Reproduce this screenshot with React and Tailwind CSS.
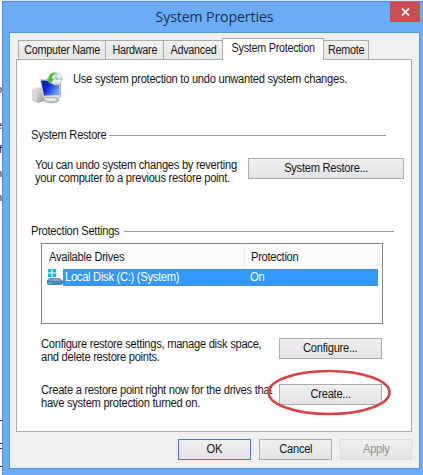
function ComputerIcon() {
  return (
    <svg className="block" width="32" height="32" viewBox="0 0 32 32">
      <defs>
        <linearGradient id="screen" x1="0" y1="0" x2="1" y2="0.5">
          <stop offset="0" stopColor="#0410a0" />
          <stop offset="0.5" stopColor="#1530d0" />
          <stop offset="1" stopColor="#6a9cf4" />
        </linearGradient>
        <linearGradient id="metal" x1="0" y1="0" x2="1" y2="1">
          <stop offset="0" stopColor="#f0f0ee" />
          <stop offset="1" stopColor="#9b9d9c" />
        </linearGradient>
      </defs>
      <path d="M1 17l6-2 6 2v12l-6 2-6-3z" fill="url(#metal)" />
      <path d="M1 17l5 2v10l-5-2z" fill="#d9dad9" />
      <ellipse cx="20.500" cy="28" rx="8" ry="3.500" fill="#b9bcbc" />
      <ellipse cx="20" cy="27" rx="6" ry="2" fill="#e8eaea" />
      <path d="M8.500 7l21 0.500 0.500 17-17.500 0.500z" fill="#d5dae0" />
      <path d="M10 8.500l18 0.500 0.500 14L13 23.500z" fill="url(#screen)" />
      <path d="M29.500 9v15.500l-2 1.500-14-0.500" fill="none" stroke="#a8acad" />
      <circle cx="25" cy="7" r="6" fill="#e4efed" stroke="#b3c6c8" />
      <path d="M25 3.500v4l3-1M25 2v1M30 7h-1M25 11v1" fill="none" stroke="#7f9ca8" strokeWidth="0.9" />
      <path d="M24.500 0.500c-5-0.500-7 2.500-7 6H15l4.500 5 4-5h-2.500c0-3 1-4 3.500-4z" fill="#4fb646" stroke="#b5e6a5" strokeWidth="0.6" />
    </svg>
  );
}

function DriveIcon() {
  return (
    <svg className="block" width="16" height="17" viewBox="0 0 16 17">
      <path d="M1 0h3.500v3.500H1zM5.500 0H9v3.500H5.500zM1 4.500h3.500V8H1zM5.500 4.500H9V8H5.500z" fill="#18b9ea" />
      <path d="M0 11l3-2h9l4 3v3l-2 1H1l-1-1z" fill="#4d87ba" />
      <path d="M1 11l3-1.500h7l3 2.500H3z" fill="#7f9ecb" />
      <path d="M1 14h4" stroke="#2fd3c4" strokeWidth="1.300" />
    </svg>
  );
}

function Tab({ children, className }) {
  return (
    <div className={`flex h-[19px] items-center justify-center border border-b-0 border-[#acacac] bg-gradient-to-b from-[#f1f1f1] to-[#e6e6e6] ${className}`}>
      <span className="-mx-2 scale-x-90">{children}</span>
    </div>
  );
}

function Button({ children, className }) {
  return (
    <button className={`flex h-[21px] shrink-0 items-center justify-center border bg-gradient-to-b from-[#f0f0f0] to-[#e4e4e4] ${className}`}>
      <span className="scale-x-93">{children}</span>
    </button>
  );
}

function Label({ children, className }) {
  return <div className={`origin-left scale-x-93 ${className}`}>{children}</div>;
}

export default function App() {
  return (
    <div className="relative flex h-[475px] w-[423px] overflow-hidden whitespace-nowrap border-t border-[#d9e8e6] bg-white font-['Liberation_Sans',Arial,sans-serif] text-[12px] leading-[13px] tracking-[-0.3px] text-[#17171b]">
      <div className="flex w-[2px] shrink-0 flex-col bg-white pt-[76px] text-[11px] leading-[24px]">
        <div className="-ml-[4px]">o</div>
        <div className="-ml-[4px] mt-[12px]">e</div>
        <div className="-ml-[1px]">f</div>
        <div className="-ml-[4px]">n</div>
        <div className="-ml-[4px]">n</div>
        <div className="mt-[211px] h-px bg-[#333]" />
        <div className="mt-[22px] h-px bg-[#333]" />
        <div className="mt-[4px] h-px bg-[#333]" />
        <div className="mt-[17px] h-px bg-[#333]" />
      </div>
      <div className="relative flex flex-1 flex-col border-l border-t border-[#4c8edb] bg-[#6cacf6]">
        <div className="flex h-[30px] w-[417px] items-start justify-end">
          <div className="mt-[4px] mr-[117px] origin-right scale-x-94 font-['Open_Sans','Noto_Sans',sans-serif] text-[15px] leading-[21px] tracking-[-0.1px] text-[#153252]">System Properties</div>
          <div className="flex h-[20px] w-[30px] items-center justify-center bg-[#c75050]">
            <svg width="9" height="8" viewBox="0 0 9 8"><path d="M1 .5l7 7M8 .5l-7 7" stroke="white" strokeWidth="1.700" /></svg>
          </div>
        </div>
        <div className="ml-[6px] flex h-[437px] w-[411px] flex-col border border-[#5596e4] bg-[#f0f0f0] pl-[6px]">
          <div className="flex h-[26px] items-end pl-[2px]">
            <Tab className="w-[88px]">Computer Name</Tab>
            <Tab className="-ml-px w-[59px]">Hardware</Tab>
            <Tab className="-ml-px w-[60px]">Advanced</Tab>
            <div className="relative -mb-px -ml-px flex h-[22px] w-[102px] items-center justify-center border border-b-0 border-[#acacac] bg-white pb-[2px]">
              <span className="scale-x-90">System Protection</span>
            </div>
            <Tab className="-ml-px w-[46px]">Remote</Tab>
          </div>
          <div className="flex h-[373px] w-[396px] flex-col border border-[#acacac] bg-white">
            <div className="flex h-[66px] pl-[14px] pt-[12px]">
              <ComputerIcon />
              <Label className="ml-[10px] mt-px">Use system protection to undo unwanted system changes.</Label>
            </div>
            <div className="ml-[14px] mt-[2px] flex h-[14px] w-[355px] items-center">
              <Label className="w-[78px]">System Restore</Label>
              <div className="h-px flex-1 bg-[#999]" />
            </div>
            <div className="mt-[15px] flex h-[32px] pl-[18px]">
              <Label className="w-[213px] pt-[2px]">You can undo system changes by reverting<br />your computer to a previous restore point.</Label>
              <Button className="mt-[1px] w-[156px] border-[#acacac]">System Restore...</Button>
            </div>
            <div className="ml-[14px] mt-[35px] flex h-[14px] w-[363px] items-center">
              <Label className="w-[93px]">Protection Settings</Label>
              <div className="h-px flex-1 bg-[#999]" />
            </div>
            <div className="ml-[24px] mt-[5px] h-[81px] w-[342px] border border-[#828790]">
              <div className="flex h-[25px] items-center bg-[#fcfcfc] pl-[7px] pt-[2px]">
                <Label className="w-[195px]">Available Drives</Label>
                <div className="flex h-full w-[136px] items-center border-x border-[#eee] pl-[6px]"><Label>Protection</Label></div>
              </div>
              <div className="flex h-[17px] pl-[5px]">
                <DriveIcon />
                <div className="flex w-[315px] items-center border border-[#568bbf] bg-[#3399ff] pl-px text-white">
                  <Label className="w-[185px]">Local Disk (C:) (System)</Label>
                  <Label>On</Label>
                </div>
              </div>
            </div>
            <div className="mt-[13px] flex h-[46px] pl-[24px]">
              <Label className="w-[238px] pt-[1px]">Configure restore settings, manage disk space,<br />and delete restore points.</Label>
              <Button className="mt-px w-[103px] border-[#acacac]">Configure...</Button>
            </div>
            <div className="flex h-[46px] pl-[24px]">
              <Label className="w-[238px] pt-[1px]">Create a restore point right now for the drives that<br />have system protection turned on.</Label>
              <Button className="mt-px w-[103px] border-[#acacac]">Create...</Button>
            </div>
          </div>
          <div className="mt-[7px] flex gap-[8px] pl-[162px]">
            <Button className="w-[73px] border-[#3c7fda]">OK</Button>
            <Button className="w-[73px] border-[#acacac]">Cancel</Button>
            <Button className="w-[72px] border-[#ddd] text-[#929292]">Apply</Button>
          </div>
        </div>
      </div>
      <svg className="pointer-events-none absolute left-[264px] top-[365px]" width="130" height="52" viewBox="0 0 130 52">
        <ellipse cx="65" cy="26.500" rx="60.500" ry="21.500" fill="none" stroke="#dd4145" strokeWidth="2.600" />
      </svg>
    </div>
  );
}
